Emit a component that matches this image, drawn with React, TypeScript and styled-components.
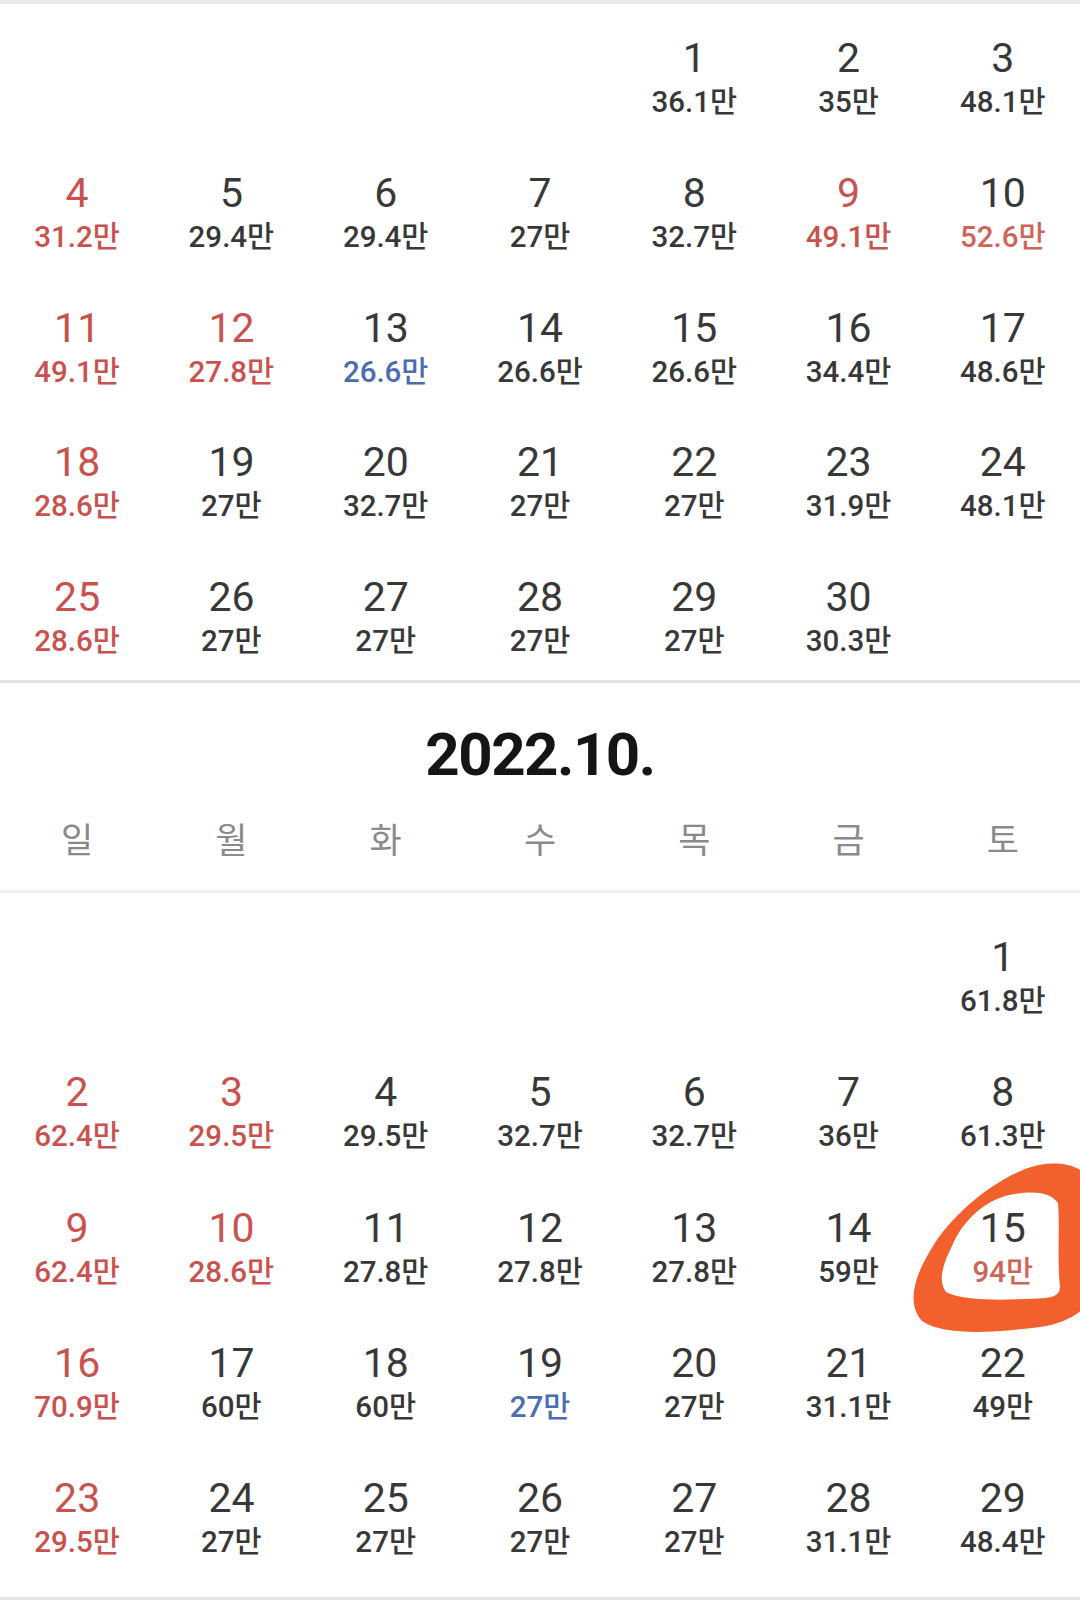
import styled, { createGlobalStyle } from "styled-components";

const GlobalStyle = createGlobalStyle`
  html, body {
    margin: 0;
    padding: 0;
    background: #ffffff;
    overflow: hidden;
  }
  body {
    font-family: Roboto, "Noto Sans CJK KR", "Noto Sans", sans-serif;
    color: #383838;
  }
`;

type Tone = "plain" | "red" | "salmon" | "blue";

const toneColor: Record<Tone, string> = {
  plain: "#383838",
  red: "#c9524f",
  salmon: "#cd6558",
  blue: "#4a6db3",
};

const Page = styled.div`
  width: 1080px;
  display: flex;
  flex-direction: column;
`;

const TopEdge = styled.div`
  height: 4px;
  background: #e7ebec;
`;

const Divider = styled.div<{ $color: string }>`
  height: 3px;
  background: ${(p) => p.$color};
`;

const Grid = styled.div<{ $top: number; $bottom: number; $gap: number }>`
  display: grid;
  grid-template-columns: repeat(7, 1fr);
  grid-auto-rows: 86px;
  row-gap: ${(p) => p.$gap}px;
  padding: ${(p) => p.$top}px 0 ${(p) => p.$bottom}px;
`;

const Cell = styled.div`
  position: relative;
  display: flex;
  flex-direction: column;
  align-items: center;
`;

const DayNum = styled.div<{ $tone: Tone }>`
  position: relative;
  z-index: 1;
  font-size: 41px;
  line-height: 48px;
  font-weight: 400;
  color: ${(p) => toneColor[p.$tone]};
`;

const Price = styled.div<{ $tone: Tone }>`
  position: relative;
  z-index: 1;
  margin-top: 2px;
  font-size: 29.5px;
  line-height: 36px;
  font-weight: 500;
  color: ${(p) => toneColor[p.$tone]};
`;

const MonthHeader = styled.div`
  display: flex;
  flex-direction: column;
  align-items: center;
  padding: 37px 0 24px;
`;

const MonthTitle = styled.h2`
  margin: 0;
  font-size: 60px;
  line-height: 70px;
  font-weight: 700;
  letter-spacing: -1.5px;
  color: #151515;
`;

const WeekRow = styled.div`
  margin-top: 28px;
  width: 100%;
  display: grid;
  grid-template-columns: repeat(7, 1fr);
`;

const WeekDay = styled.div`
  text-align: center;
  font-size: 35px;
  line-height: 48px;
  font-weight: 400;
  color: #8a8a8a;
`;

const Mark = styled.svg`
  position: absolute;
  left: -26px;
  top: -48px;
  width: 180px;
  height: 180px;
  z-index: 0;
  pointer-events: none;
`;

type Day = {
  d: number;
  p: string;
  num?: Tone;
  price?: Tone;
  mark?: boolean;
} | null;

const sep: Day[] = [
  null, null, null, null,
  { d: 1, p: "36.1만" }, { d: 2, p: "35만" }, { d: 3, p: "48.1만" },
  { d: 4, p: "31.2만", num: "red", price: "red" }, { d: 5, p: "29.4만" }, { d: 6, p: "29.4만" },
  { d: 7, p: "27만" }, { d: 8, p: "32.7만" }, { d: 9, p: "49.1만", num: "red", price: "red" },
  { d: 10, p: "52.6만", price: "salmon" },
  { d: 11, p: "49.1만", num: "red", price: "red" }, { d: 12, p: "27.8만", num: "red", price: "red" },
  { d: 13, p: "26.6만", price: "blue" }, { d: 14, p: "26.6만" }, { d: 15, p: "26.6만" },
  { d: 16, p: "34.4만" }, { d: 17, p: "48.6만" },
  { d: 18, p: "28.6만", num: "red", price: "red" }, { d: 19, p: "27만" }, { d: 20, p: "32.7만" },
  { d: 21, p: "27만" }, { d: 22, p: "27만" }, { d: 23, p: "31.9만" }, { d: 24, p: "48.1만" },
  { d: 25, p: "28.6만", num: "red", price: "red" }, { d: 26, p: "27만" }, { d: 27, p: "27만" },
  { d: 28, p: "27만" }, { d: 29, p: "27만" }, { d: 30, p: "30.3만" },
];

const oct: Day[] = [
  null, null, null, null, null, null,
  { d: 1, p: "61.8만" },
  { d: 2, p: "62.4만", num: "red", price: "red" }, { d: 3, p: "29.5만", num: "red", price: "red" },
  { d: 4, p: "29.5만" }, { d: 5, p: "32.7만" }, { d: 6, p: "32.7만" }, { d: 7, p: "36만" },
  { d: 8, p: "61.3만" },
  { d: 9, p: "62.4만", num: "red", price: "red" }, { d: 10, p: "28.6만", num: "red", price: "red" },
  { d: 11, p: "27.8만" }, { d: 12, p: "27.8만" }, { d: 13, p: "27.8만" }, { d: 14, p: "59만" },
  { d: 15, p: "94만", price: "salmon", mark: true },
  { d: 16, p: "70.9만", num: "red", price: "red" }, { d: 17, p: "60만" }, { d: 18, p: "60만" },
  { d: 19, p: "27만", price: "blue" }, { d: 20, p: "27만" }, { d: 21, p: "31.1만" },
  { d: 22, p: "49만" },
  { d: 23, p: "29.5만", num: "red", price: "red" }, { d: 24, p: "27만" }, { d: 25, p: "27만" },
  { d: 26, p: "27만" }, { d: 27, p: "27만" }, { d: 28, p: "31.1만" }, { d: 29, p: "48.4만" },
];

const weekDays = ["일", "월", "화", "수", "목", "금", "토"];

// hand-drawn orange loop around the 15th, coordinates in page space
function Circled() {
  return (
    <Mark viewBox="900 1155 180 180">
      <path
        fillRule="evenodd"
        fill="#f2602d"
        d="M 1085 1172 C 1070 1160, 1045 1160, 1025 1168 C 990 1182, 950 1215, 930 1250 C 915 1275, 906 1302, 922 1320 C 945 1336, 1000 1331, 1040 1326 C 1060 1323, 1075 1316, 1085 1306 Z
           M 1058 1202 C 1050 1190, 1030 1189, 1005 1195 C 980 1203, 962 1222, 952 1245 C 942 1265, 938 1280, 946 1291 C 965 1301, 1010 1299, 1045 1297 C 1055 1296, 1060 1293, 1060 1286 C 1057 1260, 1060 1225, 1058 1202 Z"
      />
    </Mark>
  );
}

function MonthGrid({ days, top, bottom, gap }: { days: Day[]; top: number; bottom: number; gap: number }) {
  return (
    <Grid $top={top} $bottom={bottom} $gap={gap}>
      {days.map((day, i) =>
        day ? (
          <Cell key={i}>
            {day.mark && <Circled />}
            <DayNum $tone={day.num ?? "plain"}>{day.d}</DayNum>
            <Price $tone={day.price ?? "plain"}>{day.p}</Price>
          </Cell>
        ) : (
          <Cell key={i} />
        )
      )}
    </Grid>
  );
}

export default function App() {
  return (
    <Page>
      <GlobalStyle />
      <TopEdge />
      <MonthGrid days={sep} top={30} bottom={21} gap={48.75} />
      <Divider $color="#e2e2e2" />
      <MonthHeader>
        <MonthTitle>2022.10.</MonthTitle>
        <WeekRow>
          {weekDays.map((w) => (
            <WeekDay key={w}>{w}</WeekDay>
          ))}
        </WeekRow>
      </MonthHeader>
      <Divider $color="#efefef" />
      <MonthGrid days={oct} top={40} bottom={37} gap={49.25} />
      <Divider $color="#e2e7e8" />
    </Page>
  );
}
